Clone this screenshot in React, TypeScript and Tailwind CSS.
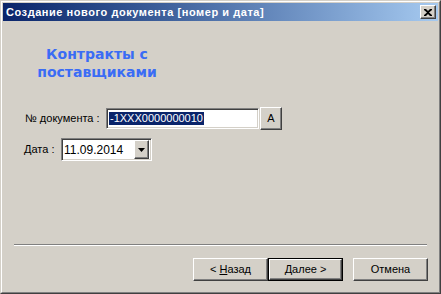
import React from 'react';

// classic raised / sunken bevels
const raised =
  'border-t border-l border-t-white border-l-white border-r border-b border-r-[#404040] border-b-[#404040] shadow-[inset_-1px_-1px_0_#808080]';
const sunken =
  'border-t border-l border-t-[#808080] border-l-[#808080] border-r border-b border-r-white border-b-white shadow-[inset_1px_1px_0_#404040,inset_-1px_-1px_0_#d4d0c8]';

const Button: React.FC<{ children: React.ReactNode; isDefault?: boolean }> = ({ children, isDefault }) => (
  <div className={`w-[75px] h-[23px] ${isDefault ? 'border border-black' : ''}`}>
    <div className={`w-full h-full flex items-center justify-center ${raised} text-[11px] text-black`}>
      {children}
    </div>
  </div>
);

const App: React.FC = () => {
  return (
    <div
      className="w-[441px] h-[294px] bg-[#d4d0c8] border border-t-[#d4d0c8] border-l-[#d4d0c8] border-r-[#404040] border-b-[#404040]"
      style={{ fontFamily: '"Liberation Sans", Arial, sans-serif' }}
    >
      <div className="w-full h-full border border-t-white border-l-white border-r-[#808080] border-b-[#808080] p-px flex flex-col">
        {/* Title bar */}
        <div className="h-[18px] flex items-center justify-between pl-[3px] pr-[2px] bg-gradient-to-r from-[#0a246a] to-[#a6caf0]">
          <span className="text-white font-bold text-[11px] tracking-[0.55px]">
            Создание нового документа [номер и дата]
          </span>
          <div className={`w-[16px] h-[14px] bg-[#d4d0c8] flex items-center justify-center ${raised}`}>
            <svg width="8" height="7" viewBox="0 0 8 7">
              <path d="M0 0h2l2 2 2-2h2v1L5 3.5 8 6v1H6L4 5 2 7H0V6l3-2.5L0 1z" fill="#000" />
            </svg>
          </div>
        </div>

        {/* Body */}
        <div className="flex-1 flex flex-col">
          <div
            className="w-[188px] mt-[24px] text-center text-[14px] leading-[18px] font-bold text-[#3a6cf5]"
            style={{ fontFamily: '"DejaVu Sans", Verdana, sans-serif' }}
          >
            Контракты с
            <br />
            поставщиками
          </div>

          <div className="mt-[26px] pl-[22px] flex items-center">
            <span className="w-[81px] text-[11px] text-black">№ документа :</span>
            <div className={`w-[153px] h-[21px] bg-white flex items-center pl-[2px] ${sunken}`}>
              <span className="bg-[#0a246a] text-white text-[11px] leading-[13px] px-px">-1XXX0000000010</span>
            </div>
            <div className="w-[22px] h-[23px] ml-[1px]">
              <div className={`w-full h-full flex items-center justify-center text-[11px] ${raised}`}>A</div>
            </div>
          </div>

          <div className="mt-[8px] pl-[21px] flex items-center">
            <span className="w-[37px] text-[11px] text-black">
              <span className="underline">Д</span>ата :
            </span>
            <div className={`w-[91px] h-[23px] bg-white flex items-center justify-between pl-[2px] pr-[2px] ${sunken}`}>
              <span className="text-[12px] text-black">11.09.2014</span>
              <div className={`w-[15px] h-[19px] bg-[#d4d0c8] flex items-center justify-center ${raised}`}>
                <svg width="7" height="4" viewBox="0 0 7 4">
                  <path d="M0 0h7L3.5 4z" fill="#000" />
                </svg>
              </div>
            </div>
          </div>

          <div className="mt-auto mx-[11px] h-[2px] border-t border-t-[#808080] border-b border-b-white" />

          <div className="mt-[12px] mb-[10px] pr-[10px] flex justify-end items-center">
            <Button>
              &lt; <span className="underline ml-[3px]">Н</span>азад
            </Button>
            <Button isDefault>
              <span className="underline">Д</span>алее &gt;
            </Button>
            <div className="w-[10px]" />
            <Button>Отмена</Button>
          </div>
        </div>
      </div>
    </div>
  );
};

export default App;
